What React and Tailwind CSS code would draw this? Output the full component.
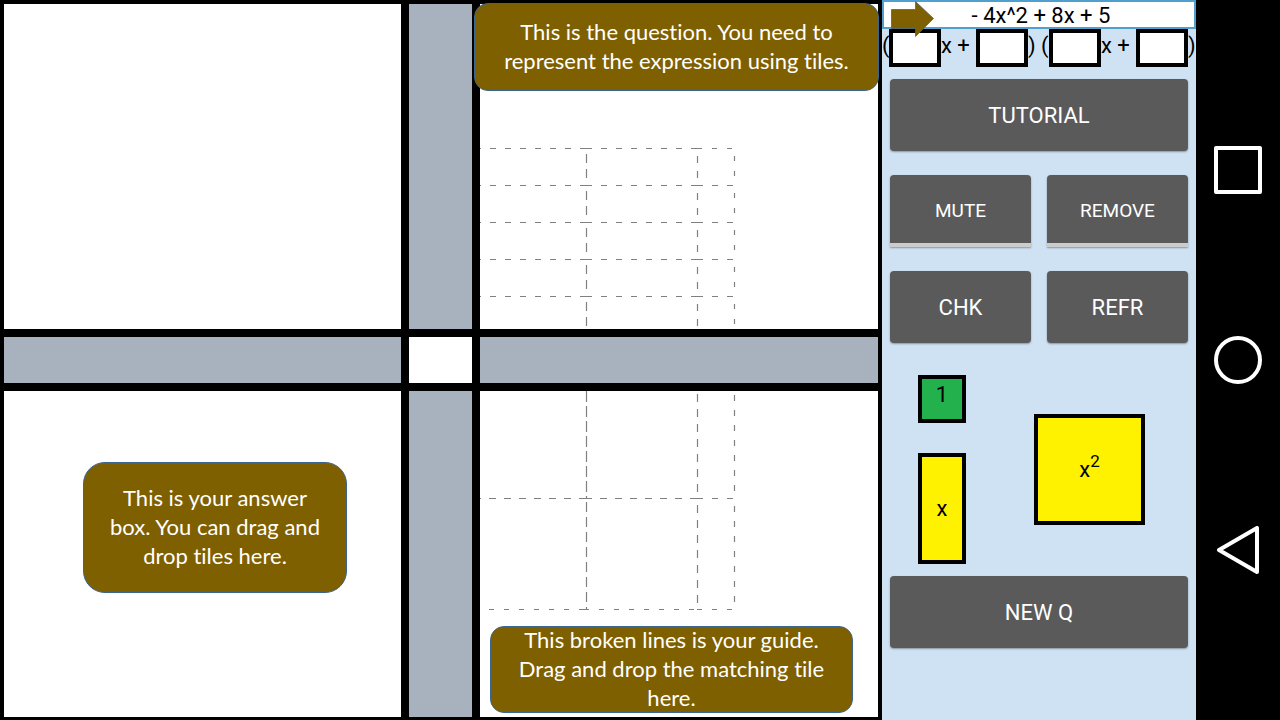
import React from "react";

const topGuides = [
  { x1: -5, y1: 144.5, x2: 106, y2: 144.5, dash: "6 9" },
  { x1: 106, y1: 144.5, x2: 217, y2: 144.5, dash: "6 9" },
  { x1: 217, y1: 144.5, x2: 254, y2: 144.5, dash: "5 10" },
  ...[181.5, 218.5, 255.5, 292.5].flatMap((y) => [
    { x1: -5, y1: y, x2: 106, y2: y, dash: "6 9" },
    { x1: 106, y1: y, x2: 217, y2: y, dash: "6 9" },
    { x1: 217, y1: y, x2: 254, y2: y, dash: "6 9" },
  ]),
  ...[144, 181, 218, 255, 292].flatMap((y) => [
    { x1: 106.5, y1: y + 6, x2: 106.5, y2: y + 36, dash: "9 6" },
    { x1: 217.5, y1: y + 8, x2: 217.5, y2: y + 36, dash: "7 8" },
    { x1: 254.5, y1: y + 8, x2: 254.5, y2: y + 36, dash: "5 10" },
  ]),
];

const bottomGuides = [
  { x1: -6, y1: 107.5, x2: 106, y2: 107.5, dash: "7 8" },
  { x1: 105, y1: 107.5, x2: 217, y2: 107.5, dash: "7 8" },
  { x1: 217, y1: 107.5, x2: 254, y2: 107.5, dash: "6 9" },
  { x1: 9, y1: 218.5, x2: 104, y2: 218.5, dash: "5 10" },
  { x1: 104, y1: 218.5, x2: 217, y2: 218.5, dash: "5 10" },
  { x1: 217, y1: 218.5, x2: 253, y2: 218.5, dash: "5 10" },
  { x1: 106.5, y1: 0, x2: 106.5, y2: 108, dash: "11 4" },
  { x1: 217.5, y1: 3, x2: 217.5, y2: 106, dash: "8 7" },
  { x1: 254.5, y1: 4, x2: 254.5, y2: 106, dash: "6 9" },
  { x1: 106.5, y1: 111, x2: 106.5, y2: 219, dash: "10 5" },
  { x1: 217.5, y1: 114, x2: 217.5, y2: 216, dash: "8 7" },
  { x1: 254.5, y1: 115, x2: 254.5, y2: 216, dash: "6 9" },
];

function Guides({ lines }) {
  return (
    <svg className="absolute inset-0 h-full w-full" aria-hidden="true">
      {lines.map((l, i) => (
        <line key={i} x1={l.x1} y1={l.y1} x2={l.x2} y2={l.y2} stroke="#808080" strokeWidth="1.2" strokeDasharray={l.dash} />
      ))}
    </svg>
  );
}

function Callout({ className, children }) {
  return (
    <p
      className={`absolute z-10 flex items-center justify-center border border-[#3a6690] bg-[#7f6000] pb-0.5 text-center font-['Lato',sans-serif] text-[22px] leading-[29px] text-white [font-variant-ligatures:none] ${className}`}
    >
      <span>{children}</span>
    </p>
  );
}

function PanelButton({ children }) {
  return (
    <button
      type="button"
      className="h-[72px] rounded bg-[#5a5a5b] text-[22px] text-white shadow-[0_1px_2px_rgba(0,0,0,0.35)]"
    >
      {children}
    </button>
  );
}

function ToggleButton({ children }) {
  return (
    <button
      type="button"
      className="h-[72px] rounded-t border-b-4 border-[#cccccc] bg-[#5a5a5b] pt-1 text-[19px] text-white shadow-[0_1px_2px_rgba(0,0,0,0.35)]"
    >
      {children}
    </button>
  );
}

function Coefficient({ label }) {
  return (
    <input
      type="text"
      aria-label={label}
      className="h-[38px] w-[52px] border-4 border-black bg-white text-center text-[20px] outline-none"
    />
  );
}

export default function App() {
  return (
    <div className="flex min-h-screen w-full bg-black font-['Roboto',sans-serif]">
      <main className="grid min-w-0 flex-1 grid-cols-[397fr_63px_398fr] grid-rows-[325fr_46px_326fr] gap-2 bg-black px-1 pt-1 pb-[3px]">
        <section className="bg-white" />
        <section className="bg-[#a7b2be]" />
        <section className="relative bg-white">
          <Guides lines={topGuides} />
          <Callout className="-top-px -right-px -left-1.5 h-[88px] rounded-[14px]">
            This is the question. You need to
            <br />
            represent the expression using tiles.
          </Callout>
        </section>

        <section className="bg-[#a7b2be]" />
        <section className="bg-white" />
        <section className="bg-[#a7b2be]" />

        <section className="relative bg-white">
          <Callout className="top-[71px] left-[79px] h-[131px] w-[264px] rounded-[22px]">
            This is your answer
            <br />
            box. You can drag and
            <br />
            drop tiles here.
          </Callout>
        </section>
        <section className="bg-[#a7b2be]" />
        <section className="relative bg-white">
          <Guides lines={bottomGuides} />
          <Callout className="bottom-1 left-2.5 h-[87px] w-[363px] rounded-[14px]">
            This broken lines is your guide.
            <br />
            Drag and drop the matching tile
            <br />
            here.
          </Callout>
        </section>
      </main>

      <aside className="flex w-[314px] shrink-0 flex-col bg-[#cfe2f3] text-black">
        <div className="relative">
          <h1 className="h-[29px] border-2 border-[#4f9fcf] bg-white pl-1 text-center text-[22px] leading-[27px]">
            - 4x^2 + 8x + 5
          </h1>
          <svg className="absolute top-0 left-2 z-10" width="46" height="38" viewBox="0 0 46 38" aria-hidden="true">
            <path d="M1.5 9.5H25.5V1.5L43.5 18.5L25.5 36.5V28.5H1.5Z" fill="#7f6000" stroke="#4a6273" strokeWidth="0.8" />
          </svg>
        </div>

        <form className="flex h-[38px] text-[22px] leading-[34px]">
          <span className="w-[7px]">(</span>
          <Coefficient label="First factor, x coefficient" />
          <span className="w-[35px]">x +</span>
          <Coefficient label="First factor, constant" />
          <span className="w-[21px] whitespace-nowrap">) (</span>
          <Coefficient label="Second factor, x coefficient" />
          <span className="w-[35px]">x +</span>
          <Coefficient label="Second factor, constant" />
          <span className="w-2">)</span>
        </form>

        <div className="flex flex-col px-2 pt-3">
          <PanelButton>TUTORIAL</PanelButton>
          <div className="grid grid-cols-2 gap-x-4 gap-y-6 pt-6">
            <ToggleButton>MUTE</ToggleButton>
            <ToggleButton>REMOVE</ToggleButton>
            <PanelButton>CHK</PanelButton>
            <PanelButton>REFR</PanelButton>
          </div>

          <div className="flex items-center gap-[68px] pt-8 pb-3 pl-7">
            <div className="flex flex-col gap-[30px]">
              <button type="button" className="h-12 w-12 border-4 border-black bg-[#22b14c] pb-2 text-[22px] leading-8">
                1
              </button>
              <button type="button" className="h-[111px] w-12 border-4 border-black bg-[#fff200] text-[22px]">
                x
              </button>
            </div>
            <button type="button" className="h-[111px] w-[111px] border-4 border-black bg-[#fff200] text-[22px]">
              x<sup className="-top-[10px] text-[17px]">2</sup>
            </button>
          </div>

          <PanelButton>NEW Q</PanelButton>
        </div>
      </aside>

      <nav className="flex w-[84px] shrink-0 flex-col items-center justify-center gap-[142px] bg-black" aria-label="System">
        <button type="button" aria-label="Recent apps">
          <svg className="block" width="48" height="48" viewBox="0 0 48 48" fill="none" stroke="#fff" strokeWidth="4" strokeLinejoin="round">
            <path d="M2 2H46V46H2Z" />
          </svg>
        </button>
        <button type="button" aria-label="Home">
          <svg className="block" width="48" height="48" viewBox="0 0 48 48" fill="none" stroke="#fff" strokeWidth="4">
            <circle cx="24" cy="24" r="22" />
          </svg>
        </button>
        <button type="button" aria-label="Back">
          <svg className="block" width="48" height="48" viewBox="0 0 48 48" fill="none" stroke="#fff" strokeWidth="4" strokeLinejoin="round">
            <path d="M43 2V46L5 24Z" />
          </svg>
        </button>
      </nav>
    </div>
  );
}
